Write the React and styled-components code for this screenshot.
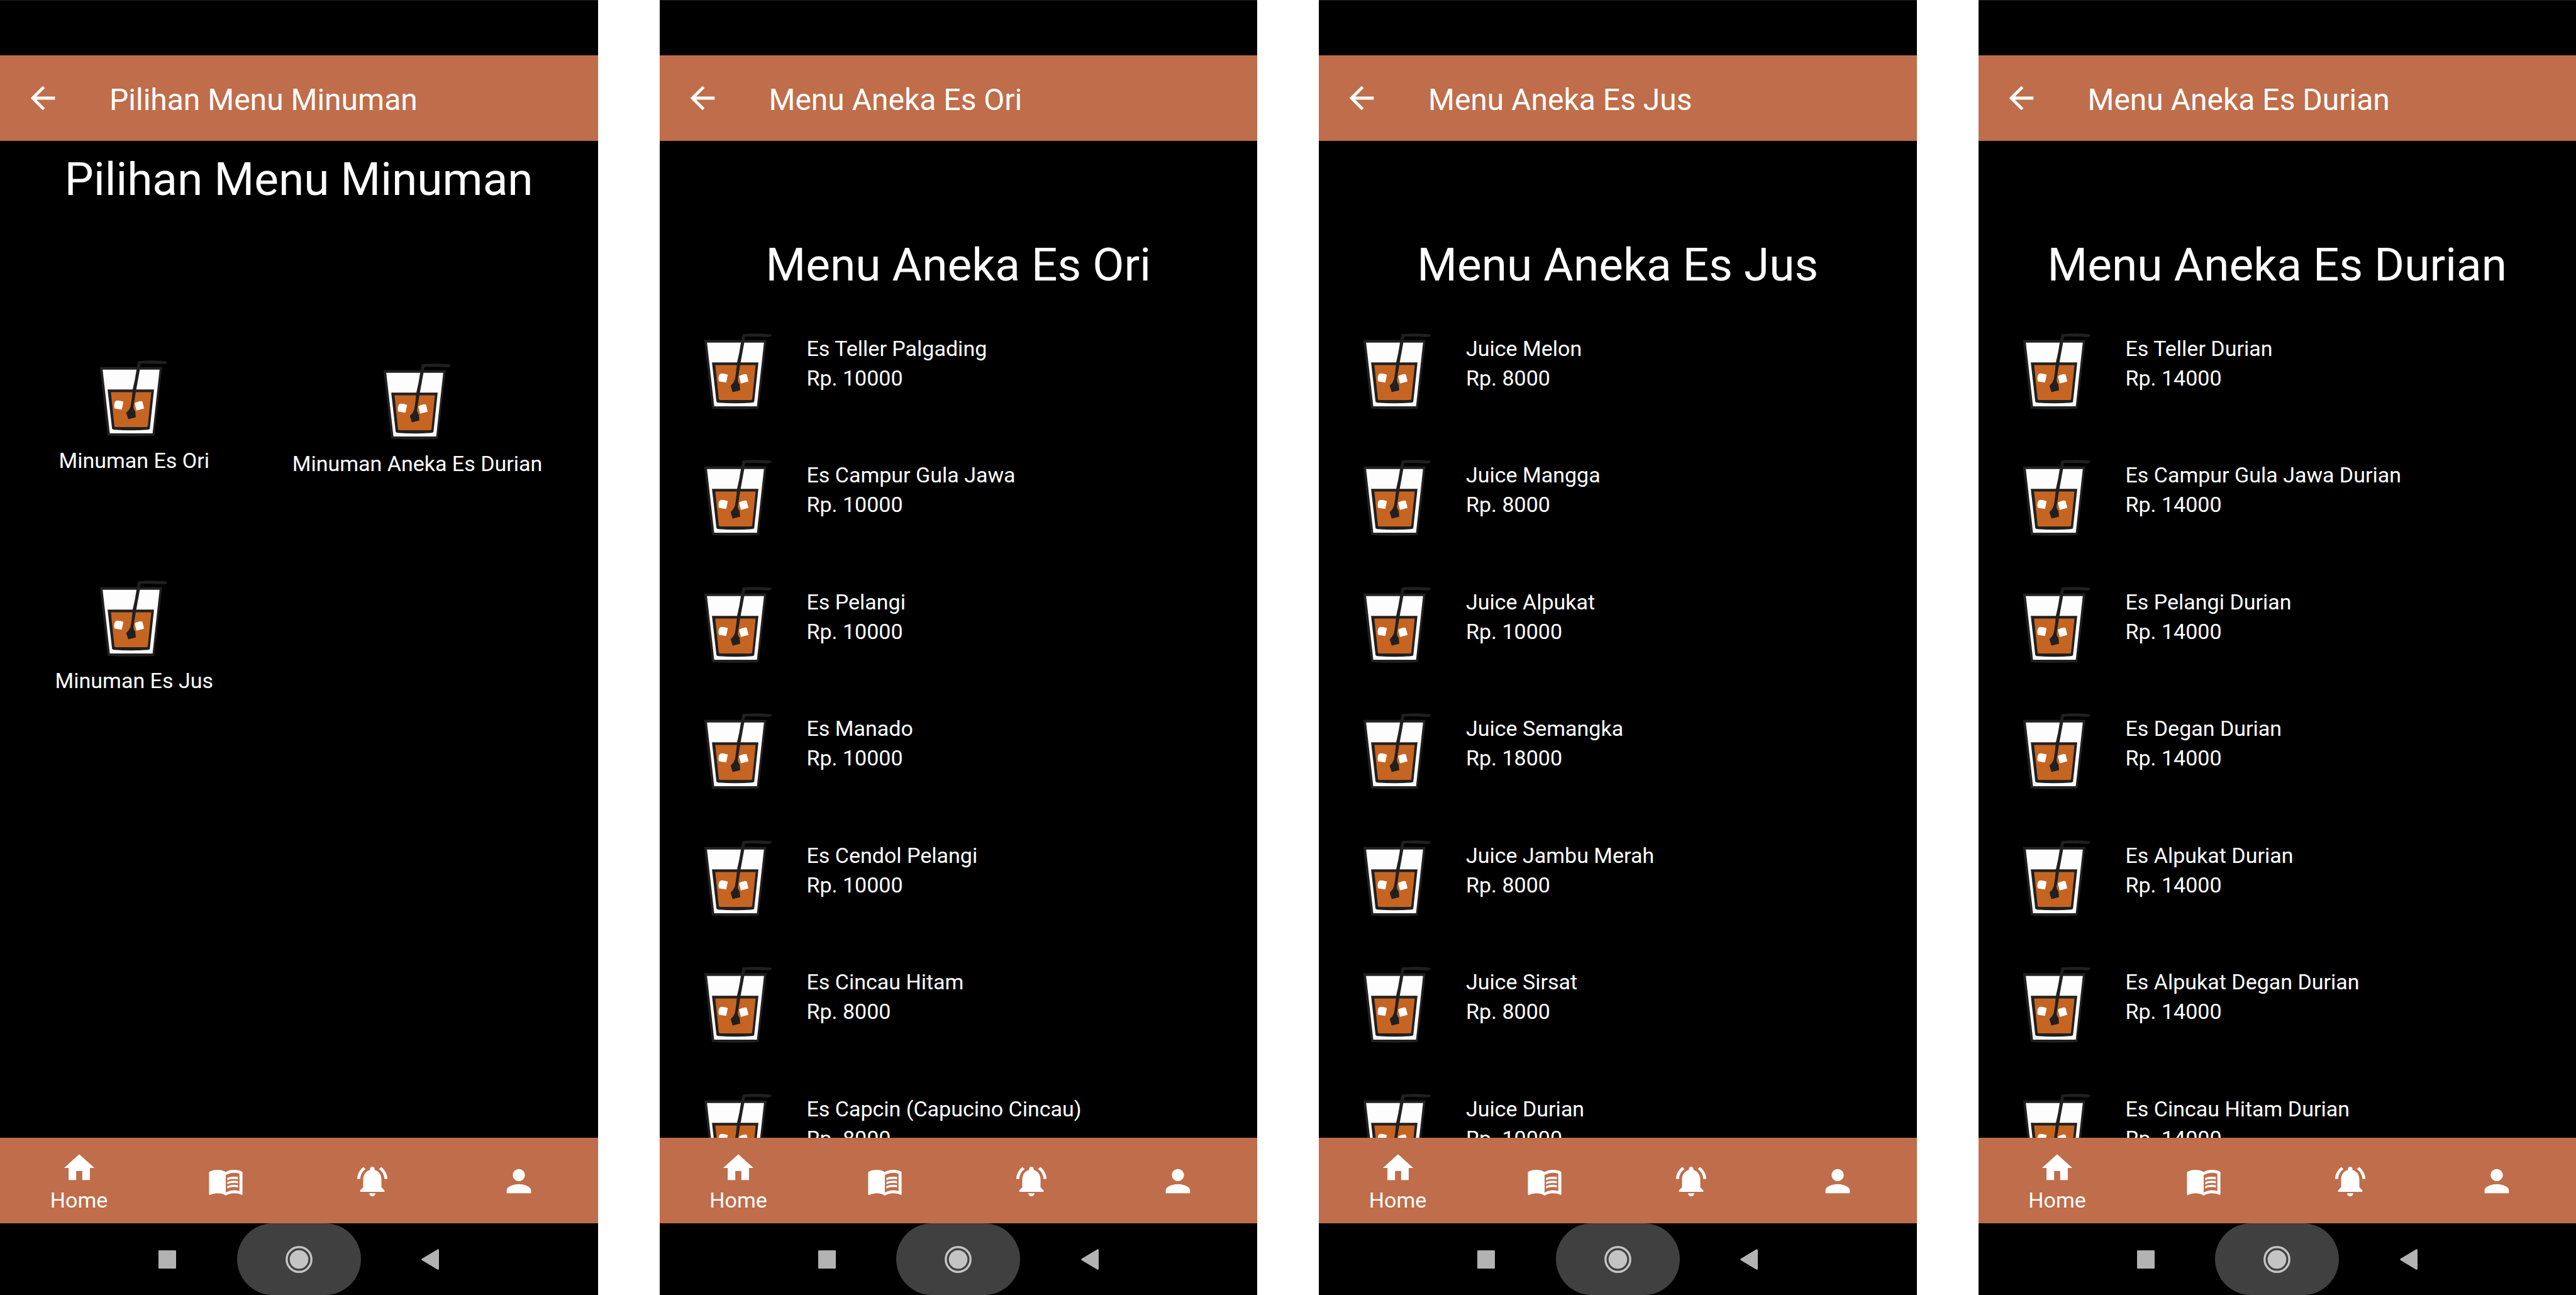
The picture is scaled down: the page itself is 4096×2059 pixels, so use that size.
import React from "react";
import styled, { createGlobalStyle } from "styled-components";
import { MdArrowBack, MdHome, MdMenuBook, MdNotificationsActive, MdPerson } from "react-icons/md";

const GlobalStyle = createGlobalStyle`
  *, *::before, *::after { box-sizing: border-box; }
  body { margin: 0; background: #fff; }
  h1, h2, p, ul { margin: 0; padding: 0; }
  ul { list-style: none; }
  button { margin: 0; padding: 0; border: 0; background: none; color: inherit; font: inherit; cursor: pointer; }
  a { color: inherit; text-decoration: none; }
  svg { display: block; flex: none; }
`;

const Gallery = styled.main`
  display: grid;
  grid-template-columns: repeat(4, minmax(0, 1fr));
  gap: 98px;
  height: 100vh;
  font-family: Roboto, "Liberation Sans", sans-serif;
  font-size: 34px;
  color: #fff;
`;

const Phone = styled.section`
  display: flex;
  flex-direction: column;
  min-height: 0;
  background: #000;
`;

const StatusBar = styled.div`
  flex: none;
  height: 88px;
  border-top: 1px solid #1f2122;
`;

const AppBar = styled.header`
  display: flex;
  flex: none;
  align-items: center;
  gap: 77px;
  height: 136px;
  padding-left: 39px;
  background: #bf6d4a;
`;

const AppTitle = styled.h1`
  padding-top: 6px;
  font-size: 48px;
  font-weight: 400;
  line-height: 56px;
`;

const Content = styled.div`
  flex: 1;
  min-height: 0;
  overflow: hidden;
  padding-top: ${(p) => p.$top}px;
`;

const Heading = styled.h2`
  font-size: 73px;
  font-weight: 400;
  line-height: 86px;
  text-align: center;
`;

const Categories = styled.div`
  display: grid;
  grid-template-columns: 9fr 10fr;
  padding-right: 50px;
`;

const CategoryColumn = styled.div`
  display: flex;
  flex-direction: column;
  align-items: center;
  gap: 160px;
  padding-top: ${(p) => p.$top}px;
`;

const Category = styled.a`
  display: flex;
  flex-direction: column;
  align-items: center;
  gap: 8px;
  line-height: 41px;
  white-space: nowrap;
`;

const DrinkList = styled.ul`
  display: grid;
  grid-auto-rows: 1fr;
  height: 1410px;
  margin-top: 56px;
  padding-left: 62px;
`;

const DrinkRow = styled.li`
  display: flex;
  align-items: flex-start;
  gap: 46px;
`;

const DrinkText = styled.div`
  padding-top: 11px;
  line-height: 47px;
  white-space: nowrap;
`;

const TabBar = styled.nav`
  display: grid;
  flex: none;
  grid-template-columns: repeat(4, 1fr);
  height: 136px;
  padding: 2px 9px 0;
  background: #bf6d4a;
`;

const Tab = styled.a`
  display: flex;
  flex-direction: column;
  align-items: center;
  justify-content: center;
  gap: 2px;
  line-height: 40px;
`;

const SystemBar = styled.div`
  display: flex;
  flex: none;
  justify-content: center;
  gap: 12px;
  height: 114px;
`;

const SystemButton = styled.button`
  display: flex;
  align-items: center;
  justify-content: center;
  width: 197px;
  && {
    background: ${(p) => (p.$pressed ? "#404040" : "transparent")};
    border-radius: 57px;
  }
`;

function Glass() {
  return (
    <svg width="126" height="141" viewBox="0 0 430 480" aria-hidden="true">
      <path d="M30 69 L368 69 L325 442 Q200 449 72 442 Z" fill="#202020" />
      <path d="M45 84 L354 84 L316 429 L84 429 Z" fill="#fdfdfd" />
      <path d="M72 191 L324 191 L301 405 Q298 410 290 410 Q200 417 108 410 Q97 409 96 402 Z" fill="#202020" />
      <path d="M90 206 L309 206 L290 392 Q288 395 280 395 L118 395 Q109 394 109 390 Z" fill="#c66422" />
      <path d="M120 252 Q126 250 140 253 L158 258 L149 301 L112 295 Q107 292 108 272 Q110 255 120 252 Z" fill="#fff" />
      <path d="M219 268 Q222 262 240 257 Q256 252 261 258 L270 295 L229 306 Z" fill="#fff" />
      <path
        d="M238 38 Q310 31 380 38 Q398 39 396 44 Q391 53 376 54 Q310 49 258 51 Q250 53 248 69 L247 84 L225 205 L212 285 Q213 302 222 310 L225 342 L184 353 L173 318 Q190 303 196 285 Q204 245 208 192 L220 138 L231 72 Z"
        fill="#202020"
      />
    </svg>
  );
}

function RecentsGlyph() {
  return (
    <svg width="28" height="29" viewBox="0 0 28 29" aria-hidden="true">
      <rect width="28" height="29" rx="1" fill="#b3b3b3" />
    </svg>
  );
}

function HomeGlyph() {
  return (
    <svg width="43" height="43" viewBox="0 0 43 43" aria-hidden="true">
      <circle cx="21.5" cy="21.5" r="19.7" fill="none" stroke="#c4c4c4" strokeWidth="3.4" />
      <circle cx="21.5" cy="21.5" r="14.8" fill="#c4c4c4" />
    </svg>
  );
}

function BackGlyph() {
  return (
    <svg width="28" height="33" viewBox="0 0 28 33" aria-hidden="true">
      <path d="M26 0.3 Q28 -0.3 28 2 L28 31 Q28 33.3 26 32.7 L1 17.7 Q-0.5 16.5 1 15.3 Z" fill="#b3b3b3" />
    </svg>
  );
}

function Screen({ title, top, children }) {
  return (
    <Phone>
      <StatusBar />
      <AppBar>
        <button type="button" aria-label="Kembali">
          <MdArrowBack size={58} />
        </button>
        <AppTitle>{title}</AppTitle>
      </AppBar>
      <Content $top={top}>
        <Heading>{title}</Heading>
        {children}
      </Content>
      <TabBar>
        <Tab href="#home">
          <MdHome size={58} />
          Home
        </Tab>
        <Tab href="#menu" aria-label="Menu">
          <MdMenuBook size={58} />
        </Tab>
        <Tab href="#notifikasi" aria-label="Notifikasi">
          <MdNotificationsActive size={58} />
        </Tab>
        <Tab href="#profil" aria-label="Profil">
          <MdPerson size={58} />
        </Tab>
      </TabBar>
      <SystemBar>
        <SystemButton type="button" aria-label="Terbaru">
          <RecentsGlyph />
        </SystemButton>
        <SystemButton type="button" aria-label="Beranda" $pressed>
          <HomeGlyph />
        </SystemButton>
        <SystemButton type="button" aria-label="Kembali">
          <BackGlyph />
        </SystemButton>
      </SystemBar>
    </Phone>
  );
}

const menus = [
  {
    title: "Menu Aneka Es Ori",
    drinks: [
      ["Es Teller Palgading", 10000],
      ["Es Campur Gula Jawa", 10000],
      ["Es Pelangi", 10000],
      ["Es Manado", 10000],
      ["Es Cendol Pelangi", 10000],
      ["Es Cincau Hitam", 8000],
      ["Es Capcin (Capucino Cincau)", 8000],
    ],
  },
  {
    title: "Menu Aneka Es Jus",
    drinks: [
      ["Juice Melon", 8000],
      ["Juice Mangga", 8000],
      ["Juice Alpukat", 10000],
      ["Juice Semangka", 18000],
      ["Juice Jambu Merah", 8000],
      ["Juice Sirsat", 8000],
      ["Juice Durian", 10000],
    ],
  },
  {
    title: "Menu Aneka Es Durian",
    drinks: [
      ["Es Teller Durian", 14000],
      ["Es Campur Gula Jawa Durian", 14000],
      ["Es Pelangi Durian", 14000],
      ["Es Degan Durian", 14000],
      ["Es Alpukat Durian", 14000],
      ["Es Alpukat Degan Durian", 14000],
      ["Es Cincau Hitam Durian", 14000],
    ],
  },
];

export default function App() {
  return (
    <>
      <GlobalStyle />
      <Gallery>
        <Screen title="Pilihan Menu Minuman" top={18}>
          <Categories>
            <CategoryColumn $top={235}>
              <Category href="#ori">
                <Glass />
                Minuman Es Ori
              </Category>
              <Category href="#jus">
                <Glass />
                Minuman Es Jus
              </Category>
            </CategoryColumn>
            <CategoryColumn $top={240}>
              <Category href="#durian">
                <Glass />
                Minuman Aneka Es Durian
              </Category>
            </CategoryColumn>
          </Categories>
        </Screen>
        {menus.map((menu) => (
          <Screen key={menu.title} title={menu.title} top={154}>
            <DrinkList>
              {menu.drinks.map(([name, price]) => (
                <DrinkRow key={name}>
                  <Glass />
                  <DrinkText>
                    <p>{name}</p>
                    <p>Rp. {price}</p>
                  </DrinkText>
                </DrinkRow>
              ))}
            </DrinkList>
          </Screen>
        ))}
      </Gallery>
    </>
  );
}
